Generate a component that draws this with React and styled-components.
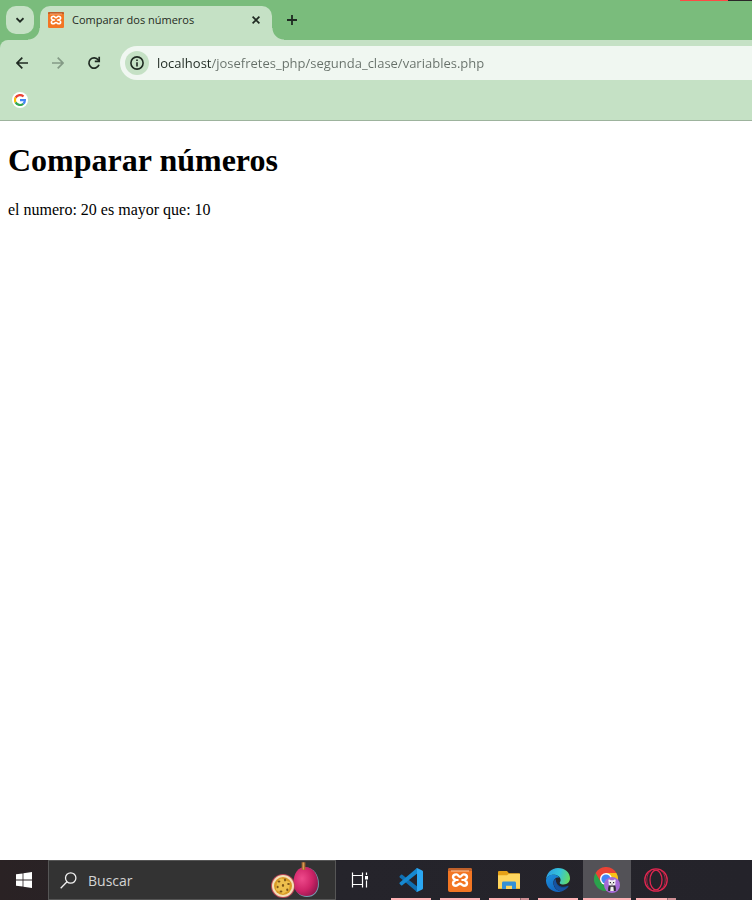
import React from "react";
import styled, { createGlobalStyle } from "styled-components";

const GlobalStyle = createGlobalStyle`
  *, *::before, *::after { box-sizing: border-box; }
  body { margin: 0; background: #fff; }
  button, input { font: inherit; color: inherit; }
`;

const ui = `"Open Sans", "Noto Sans", sans-serif`;
const ink = "#1f2a22";

const Desktop = styled.div`
  display: flex;
  flex-direction: column;
  min-height: 100vh;
  font-family: ${ui};
  overflow-x: hidden;
`;

const Browser = styled.header`
  background: #7abc7c;
  color: ${ink};
`;

const TabStrip = styled.div`
  position: relative;
  display: flex;
  height: 40px;
  padding: 6px 0 0 6px;
`;

const WindowEdge = styled.div`
  position: absolute;
  top: 0;
  right: 0;
  width: 72px;
  height: 1px;
  background: linear-gradient(90deg, #ff4a45 48px, #2b2629 48px);
`;

const PlainButton = styled.button`
  display: flex;
  align-items: center;
  justify-content: center;
  flex: none;
  padding: 0;
  border: 0;
  background: transparent;
`;

const TabSearch = styled(PlainButton)`
  width: 28px;
  height: 28px;
  margin-right: 6px;
  border-radius: 10px;
  background: #c5e1c5;
`;

const Tab = styled.div`
  position: relative;
  display: flex;
  align-items: center;
  width: 232px;
  height: 34px;
  padding: 0 8px 6px;
  gap: 8px;
  border-radius: 10px 10px 0 0;
  background: #c5e1c5;
  font-size: 11px;

  &::before, &::after {
    content: "";
    position: absolute;
    bottom: 0;
    width: 12px;
    height: 12px;
  }
  &::before {
    right: 100%;
    background: radial-gradient(circle at 0 0, transparent 11px, #c5e1c5 12px);
  }
  &::after {
    left: 100%;
    background: radial-gradient(circle at 100% 0, transparent 11px, #c5e1c5 12px);
  }
`;

const TabTitle = styled.span`
  flex: 1;
  white-space: nowrap;
  line-height: 16px;
`;

const TabClose = styled(PlainButton)`
  width: 16px;
  height: 16px;
`;

const NewTab = styled(PlainButton)`
  width: 28px;
  height: 28px;
  margin-left: 6px;
`;

const Toolbar = styled.div`
  display: flex;
  align-items: center;
  height: 46px;
  padding-left: 8px;
  gap: 8px;
  border-radius: 8px 0 0 0;
  background: #c5e1c5;
`;

const NavButton = styled(PlainButton)`
  width: 28px;
  height: 28px;
  color: ${(p) => (p.disabled ? "#849a86" : ink)};
`;

const Omnibox = styled.form`
  display: flex;
  flex: 1;
  align-items: center;
  height: 34px;
  margin-left: 4px;
  padding-left: 5px;
  gap: 8px;
  border-radius: 17px 0 0 17px;
  background: #f0f7f1;
`;

const SiteInfo = styled(PlainButton)`
  width: 24px;
  height: 24px;
  border-radius: 50%;
  background: #c5e1c5;
`;

const Address = styled.input`
  flex: 1;
  min-width: 0;
  height: 24px;
  padding: 0;
  border: 0;
  outline: 0;
  font-size: 13px;
  color: transparent;
  caret-color: ${ink};
  background: linear-gradient(90deg, ${ink} 54px, #667069 54px);
  -webkit-background-clip: text;
  background-clip: text;
`;

const BookmarksBar = styled.nav`
  display: flex;
  align-items: center;
  height: 35px;
  padding: 0 12px 6px;
  border-bottom: 1px solid #9db39d;
  background: #c5e1c5;
`;

const Bookmark = styled.a`
  display: flex;
  align-items: center;
  justify-content: center;
  width: 16px;
  height: 16px;
  border-radius: 50%;
  background: #fff;
`;

const Page = styled.main`
  flex: 1;
  padding: 0 8px;
  background: #fff;
  color: #000;
  font-family: "Liberation Serif", "Times New Roman", serif;
  font-size: 16px;
`;

const Heading = styled.h1`
  margin: 21px 0 22px;
  font-size: 32px;
  line-height: 37px;
`;

const Result = styled.p`
  margin: 0;
  line-height: 18px;
`;

const Taskbar = styled.footer`
  display: flex;
  height: 40px;
  background: linear-gradient(90deg, #2a2224, #25242b 336px, #24232a);
  color: #fff;
`;

const TaskButton = styled(PlainButton)`
  width: 48px;
  height: 40px;
`;

const SearchBox = styled.label`
  display: flex;
  align-items: center;
  flex: 0 1 288px;
  min-width: 0;
  padding: 0 16px 0 11px;
  gap: 11px;
  border: 1px solid #565656;
  background: #333;
`;

const SearchInput = styled.input`
  flex: 1;
  min-width: 0;
  padding: 0;
  border: 0;
  outline: 0;
  background: transparent;
  font-size: 14px;
  &::placeholder { color: #d4d4d4; opacity: 1; }
`;

const Apps = styled.div`
  display: flex;
  gap: 1px;
  margin-left: 3px;
`;

const AppButton = styled(TaskButton)`
  position: relative;
  background: ${(p) => (p.$active ? "#535257" : "transparent")};

  &::after {
    content: "";
    position: absolute;
    bottom: 0;
    left: ${(p) => (p.$active ? 0 : 4)}px;
    right: ${(p) => (p.$active ? 0 : 4)}px;
    height: 2px;
    background: ${(p) =>
      p.$stacked ? "linear-gradient(90deg, #ffb2b5 31px, #90686e 31px, #90686e 32px, #cf8f95 32px)" : "#ffb2b5"};
  }
`;

const Line = ({ size, d, width = 2, box = 16, ...rest }) => (
  <svg width={size} height={size} viewBox={`0 0 ${box} ${box}`} fill="none" stroke="currentColor" strokeWidth={width} {...rest}>
    <path d={d} />
  </svg>
);

const XamppIcon = ({ size }) => (
  <svg width={size} height={size} viewBox="0 0 24 24">
    <rect width="24" height="24" rx="2" fill="#f37623" />
    <path d="M0 2q0-2 2-2h20q2 0 2 2v1H0z" fill="#c0602a" />
    <path d="M3 3h18" stroke="#ffc69b" strokeWidth="1" />
    <path
      d="M8.400 6.400C6.200 6.400 5 7.600 5 9.200c0 1.400 1.200 2 2.600 2.800C6.200 12.800 5 13.400 5 14.900c0 1.700 1.300 2.800 3 2.800 2 0 2.200-1.900 4-1.900s2 1.900 4 1.900c1.700 0 3-1.100 3-2.800 0-1.500-1.200-2.100-2.600-2.900 1.400-.8 2.600-1.400 2.600-2.800 0-1.600-1.200-2.800-3.400-2.800-2 0-1.800 2.300-3.600 2.300S10.400 6.400 8.400 6.400z"
      fill="none" stroke="#fff" strokeWidth="2.400" strokeLinejoin="round"
    />
    <path d="M7.200 12h2.600M14.200 12h2.600" stroke="#fff" strokeWidth="2" strokeLinecap="round" />
  </svg>
);

const GoogleIcon = () => (
  <svg width="12" height="12" viewBox="0 0 24 24" fill="none" strokeWidth="4.4">
    <path d="M3.2 7.2A10 10 0 0 1 19 5" stroke="#ea4335" />
    <path d="M3.2 7.2a10 10 0 0 0 0 9.6" stroke="#fbbc05" />
    <path d="M3.2 16.8A10 10 0 0 0 18.6 19.5" stroke="#34a853" />
    <path d="M18.6 19.5a9.8 9.8 0 0 0 3.2-7.3H12" stroke="#4285f4" />
  </svg>
);

const InfoIcon = () => (
  <svg width="14" height="14" viewBox="0 0 14 14" fill="none" stroke={ink}>
    <circle cx="7" cy="7" r="6.1" strokeWidth="1.6" />
    <path d="M7 6.2v4.2M7 3.5v1.5" strokeWidth="1.6" />
  </svg>
);

const ReloadIcon = () => (
  <svg width="14" height="14" viewBox="0 0 14 14" fill="none" stroke={ink} strokeWidth="1.7">
    <path d="M12 8.800A5.200 5.200 0 1 1 11.300 3.900L12.200 5" />
    <path d="M12.200.8V5.300H7.800" />
  </svg>
);

const WindowsIcon = () => (
  <svg width="16" height="16" viewBox="0 0 16 16" fill="#fff">
    <path d="M0 2.3 6.6 1.4v6.1H0zM7.4 1.3 16 0v7.5H7.4zM0 8.4h6.6v6.2L0 13.7zM7.4 8.4H16V16l-8.6-1.3z" />
  </svg>
);

const SearchIcon = () => (
  <svg width="17" height="17" viewBox="0 0 17 17" fill="none" stroke="#f0f0f0" strokeWidth="1.3">
    <circle cx="10.7" cy="6" r="5.2" />
    <path d="M7 9.8.7 16.2" />
  </svg>
);

const PassionFruit = () => (
  <svg width="48" height="38" viewBox="0 0 48 38">
    <defs>
      <radialGradient id="fruit" cx=".35" cy=".4" r=".7">
        <stop offset="0" stopColor="#ee4a8b" />
        <stop offset=".6" stopColor="#cf2468" />
        <stop offset="1" stopColor="#93184f" />
      </radialGradient>
    </defs>
    <path d="M34.500 6.500c8 0 13.400 7.500 13.400 16.200 0 8.300-5 13.300-12 13.300S23.500 31 23.500 21.500s4-15 11-15z" fill="#76a0b4" />
    <path d="M34 6c8.300 0 13 8 13 16.500C47 30.500 42.500 35 35.500 35S22.500 30.500 22.500 21.500 27 6 34 6z" fill="url(#fruit)" />
    <path d="M30.800 9 30.600 1.200h3.800L34.400 9z" fill="#a9692f" />
    <path d="M31.800 8.500V1.500h1.200v7z" fill="#d49a55" />
    <circle cx="12" cy="25" r="12" fill="#b94455" />
    <circle cx="12" cy="25" r="11" fill="#f4dfb7" />
    <circle cx="12" cy="25" r="9" fill="#d99b25" />
    <path d="M6 21q3-5 6-3t7 3l-1 8-6 4-7-4z" fill="#edbf4d" />
    <g fill="#7d5418">
      <ellipse cx="8" cy="20.500" rx="1.400" ry="1" />
      <ellipse cx="14" cy="19" rx="1" ry="1.400" />
      <ellipse cx="17.500" cy="23" rx="1.300" ry="1" />
      <ellipse cx="12" cy="24.500" rx="1.100" ry="1.400" />
      <ellipse cx="6.600" cy="26" rx="1" ry="1.300" />
      <ellipse cx="10" cy="30.500" rx="1.400" ry="1" />
      <ellipse cx="16.300" cy="28.800" rx="1.100" ry="1.300" />
    </g>
  </svg>
);

const TaskViewIcon = () => (
  <svg width="18" height="16" viewBox="0 0 18 16" fill="none" stroke="#fff" strokeWidth="1.2">
    <path d="M1.500.5V3.500H11.500V.5M1.500 15.500V12.500H11.500V15.500M1.500 3.500v9M11.500 3.500v9M15.500.5v2.500M15.500 8.500v7" />
    <path d="M14 4h3v3.500h-3z" fill="#fff" stroke="none" />
  </svg>
);

const VSCodeIcon = () => (
  <svg width="24" height="24" viewBox="0 0 24 24">
    <path d="m.6 8.200 1.400-1.500q.6-.5 1.300 0L18.200 18.500 18 24 .8 9.400q-.6-.6-.2-1.200z" fill="#0f70b3" />
    <path d="m.6 15.800 1.400 1.500q.6.500 1.300 0L18.200 5.500 18 0 .8 14.600q-.6.6-.2 1.200z" fill="#1689d1" />
    <path d="M17.200.3 18 0l5.200 2.400q.8.400.8 1.300v16.600q0 .9-.8 1.300L18 24q-.7.1-1.200-.5 1.200.7 1.200-.9V1.400Q18 0 16.800.5z" fill="#2ba7f2" />
  </svg>
);

const ExplorerIcon = () => (
  <svg width="22" height="18" viewBox="0 0 22 18">
    <path d="M0 1q0-1 1-1h8l2 2.3h10q1 0 1 1V17H0z" fill="#e6a117" />
    <path d="M0 4.2h9l2-1.5h11V18H0z" fill="#ffd65e" />
    <path d="M4 18v-6q0-1.4 1.4-1.4h11.2q1.4 0 1.4 1.4v6h-4v-3.2H8V18z" fill="#3590d5" />
    <path d="M0 17h4v1H0zM18 17h4v1h-4z" fill="#f1b62e" />
  </svg>
);

const EdgeIcon = () => (
  <svg width="24" height="24" viewBox="0 0 24 24">
    <defs>
      <linearGradient id="edgeTop" x1="0" y1=".3" x2="1" y2=".5">
        <stop offset="0" stopColor="#2b9ee2" />
        <stop offset=".55" stopColor="#35c3da" />
        <stop offset="1" stopColor="#65db63" />
      </linearGradient>
      <linearGradient id="edgeLow" x1="0" y1="0" x2=".6" y2="1">
        <stop offset="0" stopColor="#1b91dd" />
        <stop offset="1" stopColor="#1464bd" />
      </linearGradient>
    </defs>
    <path d="M0 11.6C.5 5 5.500 0 12 0c7 0 12 4.700 12 10.300 0 3.900-2.900 6.200-6.300 6.200-2.600 0-4-.8-4-1.600 0-.7.900-1.100.900-2.900C14.600 9 11.500 6.700 8 6.700c-4 0-7 2-8 4.900z" fill="url(#edgeTop)" />
    <path d="M0 12C.4 8.700 3.800 6.700 7.600 6.700c2.700 0 4.800 1.200 6 3-3.500-.6-6.200 1.600-6.200 5C7.400 19.300 11 23 15.600 23.400 14.500 23.800 13.300 24 12 24 5.200 24-.3 18.500 0 12z" fill="url(#edgeLow)" />
    <path d="M9.800 11.200c-3 2.600-2.300 8 2.200 10.300 3.700 1.900 7.700.8 10.500-3.200.3-.5-.2-.8-.7-.6-5.500 2.500-12 .3-12-6.500z" fill="#114b8f" />
    <path d="M7.500 14.500c.2 4.700 3.800 8.700 8.100 8.900 3-.9 5.500-2.900 7-5.300-4.400 3.600-12.800 2.700-12.800-6.900-1.400.7-2.300 1.900-2.300 3.300z" fill="#1753a0" />
  </svg>
);

const ChromeIcon = () => (
  <svg width="26" height="26" viewBox="0 0 26 26">
    <path d="M12 12V24A12 12 0 0 0 22.400 6H12z" fill="#fbc116" />
    <path d="M12 12 1.600 6A12 12 0 0 0 12 24l5-9z" fill="#2ba24c" />
    <path d="M12 6h10.400A12 12 0 0 0 1.600 6l5.200 9z" fill="#ea4335" />
    <circle cx="12" cy="12" r="6" fill="#fff" />
    <circle cx="12" cy="12" r="4.600" fill="#4285f4" />
    <circle cx="18" cy="18" r="8" fill="#a56bd6" />
    <path d="M14.600 12.600q1.200-.6 2 .6h2.800q.8-1.200 2-.6.600 1 0 1.800v2.800q-.3 1.200-1.400 1.600h-4q-1.100-.4-1.400-1.600v-2.800q-.6-.8 0-1.800z" fill="#f1f1f1" />
    <path d="M14.800 18.500h6.400q1 2.300.6 5.500h-7.600q-.4-3.200.6-5.500z" fill="#302b36" />
    <path d="M16.600 19.800h2.800l.4 4.200h-3.600z" fill="#eee" />
    <path d="M15.800 15h1.200v1.200h-1.200zM19 15h1.200v1.200H19zM17.500 16.800h1v.8h-1z" fill="#29252f" />
  </svg>
);

const OperaIcon = () => (
  <svg width="24" height="24" viewBox="0 0 24 24" fill="none" stroke="#e12650" strokeWidth="1.300">
    <circle cx="12" cy="12" r="11.200" />
    <ellipse cx="12" cy="12" rx="6" ry="9.800" />
    <path d="M7.500 2C3.800 5 2.800 8.500 2.800 12s1 7 4.700 10M16.500 2c3.700 3 4.700 6.500 4.700 10s-1 7-4.700 10" strokeWidth=".7" />
  </svg>
);

const apps = [
  { name: "Visual Studio Code", Icon: VSCodeIcon },
  { name: "XAMPP", Icon: () => <XamppIcon size={24} /> },
  { name: "Explorador de archivos", Icon: ExplorerIcon, stacked: true },
  { name: "Microsoft Edge", Icon: EdgeIcon },
  { name: "Google Chrome", Icon: ChromeIcon, active: true },
  { name: "Opera GX", Icon: OperaIcon, stacked: true },
];

export default function App() {
  return (
    <Desktop>
      <GlobalStyle />
      <Browser>
        <TabStrip>
          <WindowEdge />
          <TabSearch aria-label="Buscar pestañas">
            <Line size={8} box={8} width={1.8} d="M.5 2.200 4 5.700 7.500 2.200" />
          </TabSearch>
          <Tab>
            <XamppIcon size={16} />
            <TabTitle>Comparar dos números</TabTitle>
            <TabClose aria-label="Cerrar pestaña">
              <Line size={8} box={8} width={1.7} d="m.6.6 6.800 6.800M7.400.6.6 7.400" />
            </TabClose>
          </Tab>
          <NewTab aria-label="Nueva pestaña">
            <Line size={10} box={10} width={1.8} d="M5 0v10M0 5h10" />
          </NewTab>
        </TabStrip>
        <Toolbar>
          <NavButton aria-label="Atrás">
            <Line size={12} box={12} width={1.7} d="M12 6H1.200M6.300.7 1 6l5.300 5.300" />
          </NavButton>
          <NavButton aria-label="Adelante" disabled>
            <Line size={12} box={12} width={1.7} d="M0 6h10.800M5.700.7 11 6l-5.300 5.300" />
          </NavButton>
          <NavButton aria-label="Recargar">
            <ReloadIcon />
          </NavButton>
          <Omnibox onSubmit={(e) => e.preventDefault()}>
            <SiteInfo type="button" aria-label="Información del sitio">
              <InfoIcon />
            </SiteInfo>
            <Address
              aria-label="Dirección"
              spellCheck={false}
              defaultValue="localhost/josefretes_php/segunda_clase/variables.php"
            />
          </Omnibox>
        </Toolbar>
        <BookmarksBar>
          <Bookmark href="#google" aria-label="Google">
            <GoogleIcon />
          </Bookmark>
        </BookmarksBar>
      </Browser>
      <Page>
        <Heading>Comparar números</Heading>
        <Result>el numero: 20 es mayor que: 10</Result>
      </Page>
      <Taskbar>
        <TaskButton aria-label="Inicio">
          <WindowsIcon />
        </TaskButton>
        <SearchBox>
          <SearchIcon />
          <SearchInput aria-label="Buscar" placeholder="Buscar" />
          <PassionFruit />
        </SearchBox>
        <TaskButton aria-label="Vista de tareas">
          <TaskViewIcon />
        </TaskButton>
        <Apps>
          {apps.map(({ name, Icon, active, stacked }) => (
            <AppButton key={name} aria-label={name} $active={active} $stacked={stacked}>
              <Icon />
            </AppButton>
          ))}
        </Apps>
      </Taskbar>
    </Desktop>
  );
}
